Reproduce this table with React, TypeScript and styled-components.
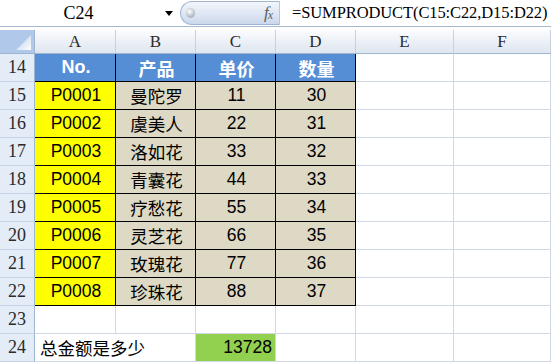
import React from "react";
import styled, { createGlobalStyle, css } from "styled-components";

const GlobalStyle = createGlobalStyle`
  html, body {
    margin: 0;
    padding: 0;
    background: #fff;
    overflow: hidden;
  }
`;

const Page = styled.div`
  width: 551px;
  height: 363px;
  overflow: hidden;
  background: #fff;
`;

// formula bar on top
const FormulaBar = styled.div`
  display: flex;
  height: 27px;
  box-sizing: border-box;
  border-bottom: 1px solid #a7b8cf;
  margin-bottom: 3px;
  font-family: "Liberation Serif", "Noto Sans CJK SC", serif;
  font-size: 18px;
  color: #000;
`;

const NameBox = styled.div`
  width: 180px;
  display: flex;
  align-items: center;
`;

const NameText = styled.div`
  width: 157px;
  text-align: center;
`;

const DropArrow = styled.span`
  width: 0;
  height: 0;
  border-left: 4px solid transparent;
  border-right: 4px solid transparent;
  border-top: 5px solid #000;
  margin-left: 8px;
  margin-top: 1px;
`;

const FxPill = styled.div`
  width: 100px;
  height: 24px;
  margin-top: 1px;
  box-sizing: border-box;
  display: flex;
  align-items: center;
  justify-content: space-between;
  padding: 0 7px 0 5px;
  border: 1px solid #9fb4d2;
  border-right: 1px solid #b7c6da;
  border-radius: 12px 0 0 12px;
  background: linear-gradient(#f3f6fb, #dde6f3 55%, #cbd8ec);
`;

const Knob = styled.span`
  width: 9px;
  height: 10px;
  border-radius: 50%;
  background: radial-gradient(circle at 40% 35%, #ffffff, #b8bec8 60%, #8d96a3);
`;

const Fx = styled.span`
  font-family: "Liberation Serif", serif;
  font-style: italic;
  color: #5a5f68;
  font-size: 17px;
  letter-spacing: -1px;

  & sub {
    font-size: 12px;
    vertical-align: -1px;
  }
`;

const FormulaInput = styled.div`
  flex: 1;
  display: flex;
  align-items: center;
  padding-left: 12px;
  font-size: 16.5px;
  letter-spacing: -0.1px;
  white-space: nowrap;
`;

// the sheet itself
const Sheet = styled.div`
  display: grid;
  grid-template-columns: 35px 81px 80px 80px 80px 98px 1fr;
  grid-template-rows: 24px repeat(11, 28px);
`;

const Corner = styled.div`
  box-sizing: border-box;
  background: #b0c8ea;
  border-right: 1px solid #9eb6ce;
  border-bottom: 1px solid #9eb6ce;
  display: flex;
  align-items: flex-end;
  justify-content: flex-end;
  padding: 0 3px 3px 0;
`;

const CornerMark = styled.div`
  width: 15px;
  height: 15px;
  clip-path: polygon(100% 0, 100% 100%, 0 100%);
  background: linear-gradient(135deg, #c9d9ef 30%, #ffffff 100%);
`;

const ColHead = styled.div`
  box-sizing: border-box;
  display: flex;
  align-items: center;
  justify-content: center;
  background: linear-gradient(#fbfcfe, #e9eef5 60%, #dfe6ef);
  border-right: 1px solid #c8d2de;
  border-bottom: 1px solid #9eb6ce;
  font-family: "Liberation Serif", serif;
  font-size: 17px;
  color: #2a2a2a;
`;

const RowHead = styled.div`
  box-sizing: border-box;
  display: flex;
  align-items: center;
  justify-content: center;
  background: #e4ecf7;
  border-right: 1px solid #9eb6ce;
  border-bottom: 1px solid #c5d3e4;
  font-family: "Liberation Serif", serif;
  font-size: 18px;
  color: #2a2a2a;
`;

type CellProps = {
  $fill?: string;
  $color?: string;
  $align?: "left" | "center" | "right";
  $bold?: boolean;
  $boxed?: boolean;
  $span?: number;
};

const Cell = styled.div<CellProps>`
  box-sizing: border-box;
  display: flex;
  align-items: center;
  overflow: hidden;
  white-space: nowrap;
  background: ${(p) => p.$fill || "#fff"};
  color: ${(p) => p.$color || "#000"};
  font-family: "Liberation Sans", "Noto Sans CJK SC", sans-serif;
  font-size: ${(p) => (p.$bold ? "18px" : "17.5px")};
  font-weight: ${(p) => (p.$bold ? 700 : 400)};
  border-right: 1px solid #d0d7e5;
  border-bottom: 1px solid #d0d7e5;
  justify-content: ${(p) =>
    p.$align === "left" ? "flex-start" : p.$align === "right" ? "flex-end" : "center"};
  padding: 0 3px 0 5px;
  ${(p) =>
    p.$boxed &&
    css`
      border-right-color: #000;
      border-bottom-color: #000;
    `}
  ${(p) =>
    p.$span &&
    css`
      grid-column: span ${p.$span};
    `}
`;

const BLUE = "#558ed5";
const YELLOW = "#ffff00";
const TAN = "#ddd9c4";
const GREEN = "#92d050";

const items = [
  ["P0001", "曼陀罗", 11, 30],
  ["P0002", "虞美人", 22, 31],
  ["P0003", "洛如花", 33, 32],
  ["P0004", "青囊花", 44, 33],
  ["P0005", "疗愁花", 55, 34],
  ["P0006", "灵芝花", 66, 35],
  ["P0007", "玫瑰花", 77, 36],
  ["P0008", "珍珠花", 88, 37],
];

const cols = ["A", "B", "C", "D", "E", "F"];

export default function App() {
  return (
    <Page>
      <GlobalStyle />
      <FormulaBar>
        <NameBox>
          <NameText>C24</NameText>
          <DropArrow />
        </NameBox>
        <FxPill>
          <Knob />
          <Fx>
            f<sub>x</sub>
          </Fx>
        </FxPill>
        <FormulaInput>=SUMPRODUCT(C15:C22,D15:D22)</FormulaInput>
      </FormulaBar>

      <Sheet>
        <Corner>
          <CornerMark />
        </Corner>
        {cols.map((c) => (
          <ColHead key={c}>{c}</ColHead>
        ))}

        <RowHead>14</RowHead>
        {["No.", "产品", "单价", "数量"].map((h) => (
          <Cell key={h} $fill={BLUE} $color="#fff" $bold $boxed>
            {h}
          </Cell>
        ))}
        <Cell />
        <Cell />

        {items.map((row, i) => (
          <React.Fragment key={row[0]}>
            <RowHead>{15 + i}</RowHead>
            <Cell $fill={YELLOW} $boxed>
              {row[0]}
            </Cell>
            <Cell $fill={TAN} $boxed>
              {row[1]}
            </Cell>
            <Cell $fill={TAN} $boxed>
              {row[2]}
            </Cell>
            <Cell $fill={TAN} $boxed>
              {row[3]}
            </Cell>
            <Cell />
            <Cell />
          </React.Fragment>
        ))}

        <RowHead>23</RowHead>
        {cols.map((c) => (
          <Cell key={c} />
        ))}

        <RowHead>24</RowHead>
        <Cell $align="left" $span={2}>
          总金额是多少
        </Cell>
        <Cell $fill={GREEN} $align="right">
          13728
        </Cell>
        <Cell />
        <Cell />
        <Cell />
      </Sheet>
    </Page>
  );
}
